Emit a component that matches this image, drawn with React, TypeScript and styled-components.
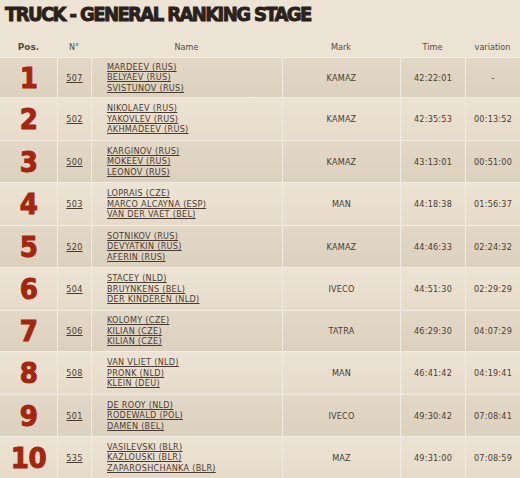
import React from "react";
import styled, { createGlobalStyle } from "styled-components";

const Global = createGlobalStyle`
  html, body { margin: 0; padding: 0; background: #ede3d5; }
  body { width: 520px; height: 478px; overflow: hidden; }
`;

const Page = styled.div`
  width: 520px;
  background: #ede3d5;
  font-family: "DejaVu Sans Condensed", "DejaVu Sans", sans-serif;
  color: #4a3c32;
`;

const Title = styled.h1`
  margin: 0;
  padding: 2px 0 0 5px;
  height: 36px;
  box-sizing: border-box;
  font-family: "DejaVu Sans Condensed", "DejaVu Sans", sans-serif;
  font-weight: 900;
  font-size: 20px;
  line-height: 24px;
  letter-spacing: -1.6px;
  color: #2b211c;
  -webkit-text-stroke: 0.9px #2b211c;
`;

const COLS = "57px 34px 191px 118px 65px 55px";

const HeaderRow = styled.div`
  display: grid;
  grid-template-columns: ${COLS};
  height: 21px;
  align-items: center;
  font-size: 9px;
  color: #574a40;
`;

const HeadCell = styled.div<{ $bold?: boolean }>`
  text-align: center;
  font-weight: ${(p) => (p.$bold ? 700 : 400)};
  font-family: ${(p) =>
    p.$bold ? '"DejaVu Sans", sans-serif' : '"DejaVu Sans Condensed", "DejaVu Sans", sans-serif'};
`;

const Row = styled.div<{ $odd: boolean; $h: number }>`
  display: grid;
  grid-template-columns: ${COLS};
  height: ${(p) => p.$h}px;
  box-sizing: border-box;
  border-top: 1px solid #f3ece2;
  background: ${(p) =>
    p.$odd
      ? "linear-gradient(#e3d8c8, #dcd0be)"
      : "linear-gradient(#ede3d4, #e6dbca)"};
`;

const Cell = styled.div<{ $align?: "left" | "center" }>`
  display: flex;
  align-items: center;
  justify-content: ${(p) => (p.$align === "left" ? "flex-start" : "center")};
  border-left: 1px solid #f3ece2;
  font-size: 9px;
  &:first-child { border-left: none; }
`;

const PosNum = styled.span`
  font-family: "DejaVu Sans Condensed", "DejaVu Sans", sans-serif;
  font-weight: 900;
  font-size: 29px;
  line-height: 1;
  color: #a3270f;
  letter-spacing: -0.5px;
  -webkit-text-stroke: 1px #a3270f;
  margin-top: 1px;
`;

const Link = styled.a`
  color: #4a3c32;
  text-decoration: underline;
  text-underline-offset: 1px;
  font-size: 9px;
  letter-spacing: 0.3px;
`;

const Names = styled.div`
  display: flex;
  flex-direction: column;
  padding-left: 15px;
  line-height: 10.5px;
`;

const Plain = styled.span`
  font-size: 9px;
  letter-spacing: 0.2px;
  color: #4a3c32;
`;

type Entry = {
  pos: number;
  num: string;
  names: string[];
  mark: string;
  time: string;
  variation: string;
  h: number;
};

const data: Entry[] = [
  { pos: 1, num: "507", names: ["MARDEEV (RUS)", "BELYAEV (RUS)", "SVISTUNOV (RUS)"], mark: "KAMAZ", time: "42:22:01", variation: "-", h: 40 },
  { pos: 2, num: "502", names: ["NIKOLAEV (RUS)", "YAKOVLEV (RUS)", "AKHMADEEV (RUS)"], mark: "KAMAZ", time: "42:35:53", variation: "00:13:52", h: 43 },
  { pos: 3, num: "500", names: ["KARGINOV (RUS)", "MOKEEV (RUS)", "LEONOV (RUS)"], mark: "KAMAZ", time: "43:13:01", variation: "00:51:00", h: 42 },
  { pos: 4, num: "503", names: ["LOPRAIS (CZE)", "MARCO ALCAYNA (ESP)", "VAN DER VAET (BEL)"], mark: "MAN", time: "44:18:38", variation: "01:56:37", h: 43 },
  { pos: 5, num: "520", names: ["SOTNIKOV (RUS)", "DEVYATKIN (RUS)", "AFERIN (RUS)"], mark: "KAMAZ", time: "44:46:33", variation: "02:24:32", h: 42 },
  { pos: 6, num: "504", names: ["STACEY (NLD)", "BRUYNKENS (BEL)", "DER KINDEREN (NLD)"], mark: "IVECO", time: "44:51:30", variation: "02:29:29", h: 43 },
  { pos: 7, num: "506", names: ["KOLOMY (CZE)", "KILIAN (CZE)", "KILIAN (CZE)"], mark: "TATRA", time: "46:29:30", variation: "04:07:29", h: 41 },
  { pos: 8, num: "508", names: ["VAN VLIET (NLD)", "PRONK (NLD)", "KLEIN (DEU)"], mark: "MAN", time: "46:41:42", variation: "04:19:41", h: 43 },
  { pos: 9, num: "501", names: ["DE ROOY (NLD)", "RODEWALD (POL)", "DAMEN (BEL)"], mark: "IVECO", time: "49:30:42", variation: "07:08:41", h: 42 },
  { pos: 10, num: "535", names: ["VASILEVSKI (BLR)", "KAZLOUSKI (BLR)", "ZAPAROSHCHANKA (BLR)"], mark: "MAZ", time: "49:31:00", variation: "07:08:59", h: 42 },
];

export default function App() {
  return (
    <Page>
      <Global />
      <Title>TRUCK - GENERAL RANKING STAGE</Title>
      <HeaderRow>
        <HeadCell $bold>Pos.</HeadCell>
        <HeadCell>N°</HeadCell>
        <HeadCell>Name</HeadCell>
        <HeadCell>Mark</HeadCell>
        <HeadCell>Time</HeadCell>
        <HeadCell>variation</HeadCell>
      </HeaderRow>
      {data.map((r, i) => (
        <Row key={r.pos} $odd={i % 2 === 0} $h={r.h}>
          <Cell>
            <PosNum>{r.pos}</PosNum>
          </Cell>
          <Cell>
            <Link href="#">{r.num}</Link>
          </Cell>
          <Cell $align="left">
            <Names>
              {r.names.map((n, k) => (
                <Link key={k} href="#">{n}</Link>
              ))}
            </Names>
          </Cell>
          <Cell>
            <Plain>{r.mark}</Plain>
          </Cell>
          <Cell>
            <Plain>{r.time}</Plain>
          </Cell>
          <Cell>
            <Plain>{r.variation}</Plain>
          </Cell>
        </Row>
      ))}
    </Page>
  );
}
